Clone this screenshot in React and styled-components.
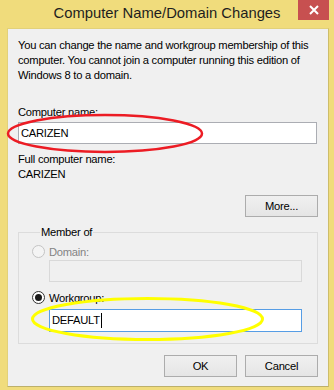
import React from "react";
import styled, { createGlobalStyle } from "styled-components";

const Global = createGlobalStyle`
  html, body { margin: 0; padding: 0; }
  body { background: #f0dc7c; }
  * { box-sizing: border-box; }
`;

const Window = styled.div`
  position: relative;
  width: 334px;
  height: 390px;
  background: #f0dc7c;
  display: flex;
  flex-direction: column;
  font-family: "Liberation Sans", Arial, sans-serif;
  font-size: 11.2px;
  letter-spacing: -0.25px;
  color: #000;
`;

const TitleBar = styled.div`
  height: 28px;
  display: grid;
  grid-template-columns: 1fr auto 1fr;
  align-items: start;
  letter-spacing: 0;
`;

const Title = styled.div`
  grid-column: 2;
  font-size: 14.8px;
  line-height: 15px;
  padding-top: 6px;
  color: #1e1e1e;
  white-space: nowrap;
`;

const CloseButton = styled.div`
  grid-column: 3;
  justify-self: end;
  margin-right: 5px;
  width: 31px;
  height: 20px;
  background: #c75050;
  display: flex;
  align-items: center;
  justify-content: center;
`;

const Client = styled.div`
  margin: 0 5px 0 7px;
  height: 359px;
  background: #f0f0f0;
  border: 1px solid #e2d17a;
  border-bottom-color: #bdb06a;
  border-right-color: #cdbd6a;
  padding: 9px 10px 0 10px;
  display: flex;
  flex-direction: column;
`;

const Text = styled.div`
  line-height: ${(p) => p.$lh || 15}px;
  margin-top: ${(p) => p.$mt || 0}px;
  color: ${(p) => (p.$disabled ? "#838383" : "#000")};
  white-space: nowrap;
`;

const Input = styled.div`
  height: ${(p) => p.$h || 22}px;
  margin-top: ${(p) => p.$mt || 0}px;
  margin-left: ${(p) => p.$ml || 0}px;
  width: ${(p) => p.$w}px;
  border: 1px solid
    ${(p) => (p.$focus ? "#569de5" : p.$disabled ? "#d9d9d9" : "#abadb3")};
  background: ${(p) => (p.$disabled ? "#f0f0f0" : "#fff")};
  padding-left: 2px;
  display: flex;
  align-items: center;
  line-height: 15px;
  white-space: nowrap;
`;

const Caret = styled.span`
  display: inline-block;
  width: 1px;
  height: 15px;
  background: #000;
  margin-left: 1px;
`;

const ButtonRow = styled.div`
  display: flex;
  justify-content: flex-end;
  gap: 8px;
  margin-top: ${(p) => p.$mt || 0}px;
`;

const Button = styled.div`
  width: 73px;
  height: 22px;
  border: 1px solid #acacac;
  background: linear-gradient(#f0f0f0, #e5e5e5);
  display: flex;
  align-items: center;
  justify-content: center;
  line-height: 15px;
`;

const Group = styled.fieldset`
  margin: 8px 0 0 0;
  width: 300px;
  border: 1px solid #dcdcdc;
  padding: 0 0 11px 13px;
  display: flex;
  flex-direction: column;
`;

const Legend = styled.legend`
  margin-left: 8px;
  padding: 0 1px;
  line-height: 15px;
`;

const RadioRow = styled.div`
  display: flex;
  align-items: center;
  gap: 4px;
  height: 15px;
  margin-top: ${(p) => p.$mt || 0}px;
  color: ${(p) => (p.$disabled ? "#838383" : "#000")};
`;

const RadioCircle = styled.span`
  width: 13px;
  height: 13px;
  border-radius: 50%;
  border: 1px solid ${(p) => (p.$disabled ? "#c4c4c4" : "#333")};
  background: ${(p) => (p.$disabled ? "#f4f4f4" : "#fff")};
  display: flex;
  align-items: center;
  justify-content: center;
  &::after {
    content: "";
    display: ${(p) => (p.$checked ? "block" : "none")};
    width: 7px;
    height: 7px;
    border-radius: 50%;
    background: #1a1a1a;
  }
`;

const Overlay = styled.svg`
  position: absolute;
  left: 0;
  top: 0;
  pointer-events: none;
`;

export default function App() {
  return (
    <Window>
      <Global />
      <TitleBar>
        <Title>Computer Name/Domain Changes</Title>
        <CloseButton>
          <svg width="10" height="10" viewBox="0 0 10 10">
            <path d="M1 1 L9 9 M9 1 L1 9" stroke="#fff" strokeWidth="2" />
          </svg>
        </CloseButton>
      </TitleBar>
      <Client>
        <Text>You can change the name and workgroup membership of this</Text>
        <Text>computer. You cannot join a computer running this edition of</Text>
        <Text>Windows 8 to a domain.</Text>
        <Text $mt={22}>Computer name:</Text>
        <Input $w={299} $mt={2}>CARIZEN</Input>
        <Text $mt={8}>Full computer name:</Text>
        <Text $lh={14}>CARIZEN</Text>
        <ButtonRow $mt={14}>
          <Button>More...</Button>
        </ButtonRow>
        <Group>
          <Legend>Member of</Legend>
          <RadioRow $disabled $mt={4}>
            <RadioCircle $disabled />
            Domain:
          </RadioRow>
          <Input $disabled $w={253} $ml={17} $mt={1} />
          <RadioRow $mt={8}>
            <RadioCircle $checked />
            Workgroup:
          </RadioRow>
          <Input $focus $w={253} $ml={17} $mt={4} $h={23}>
            DEFAULT
            <Caret />
          </Input>
        </Group>
        <ButtonRow $mt={11}>
          <Button>OK</Button>
          <Button>Cancel</Button>
        </ButtonRow>
      </Client>
      <Overlay width="334" height="390" viewBox="0 0 334 390">
        <ellipse cx="105" cy="133.5" rx="97" ry="18.5" fill="none" stroke="#ec1c24" strokeWidth="2.5" />
        <ellipse cx="147.5" cy="319" rx="115" ry="20.5" fill="none" stroke="#ffff00" strokeWidth="3" />
      </Overlay>
    </Window>
  );
}
